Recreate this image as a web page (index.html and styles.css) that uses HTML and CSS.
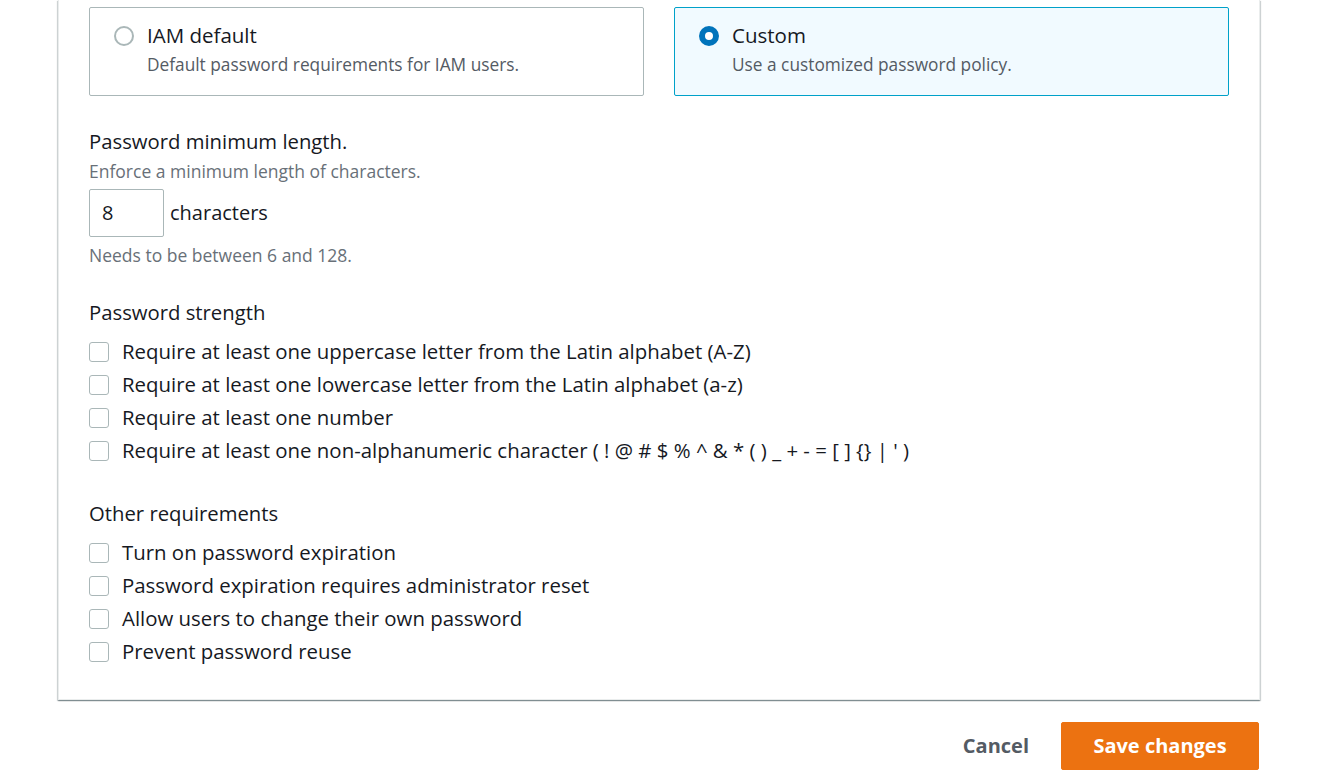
FILE: index.html
```html
<!DOCTYPE html>
<html lang="en">
<head>
<meta charset="utf-8">
<title>Password policy</title>
<link rel="stylesheet" href="styles.css">
</head>
<body>
<div class="page">
  <div class="card">
    <div class="tiles">
      <div class="tile">
        <div class="tile-head"><span class="radio"></span><span class="tile-label">IAM default</span></div>
        <div class="tile-desc">Default password requirements for IAM users.</div>
      </div>
      <div class="tile tile-selected">
        <div class="tile-head"><span class="radio radio-on"></span><span class="tile-label">Custom</span></div>
        <div class="tile-desc">Use a customized password policy.</div>
      </div>
    </div>

    <div class="field field-length">
      <div class="field-label">Password minimum length.</div>
      <div class="field-desc">Enforce a minimum length of characters.</div>
      <div class="length-row">
        <div class="input">8</div>
        <span class="unit">characters</span>
      </div>
      <div class="field-hint">Needs to be between 6 and 128.</div>
    </div>

    <div class="field field-strength">
      <div class="field-label">Password strength</div>
      <div class="checks">
        <div class="check"><span class="box"></span><span class="check-text">Require at least one uppercase letter from the Latin alphabet (A-Z)</span></div>
        <div class="check"><span class="box"></span><span class="check-text">Require at least one lowercase letter from the Latin alphabet (a-z)</span></div>
        <div class="check"><span class="box"></span><span class="check-text">Require at least one number</span></div>
        <div class="check"><span class="box"></span><span class="check-text">Require at least one non-alphanumeric character ( ! @ # $ % ^ &amp; * ( ) _ + - = [ ] {} | ' )</span></div>
      </div>
    </div>

    <div class="field field-other">
      <div class="field-label">Other requirements</div>
      <div class="checks">
        <div class="check"><span class="box"></span><span class="check-text">Turn on password expiration</span></div>
        <div class="check"><span class="box"></span><span class="check-text">Password expiration requires administrator reset</span></div>
        <div class="check"><span class="box"></span><span class="check-text">Allow users to change their own password</span></div>
        <div class="check"><span class="box"></span><span class="check-text">Prevent password reuse</span></div>
      </div>
    </div>
  </div>

  <div class="actions">
    <button class="btn-link">Cancel</button>
    <button class="btn-primary">Save changes</button>
  </div>
</div>
</body>
</html>
```

FILE: styles.css
```css
* { box-sizing: border-box; }
html, body { margin: 0; padding: 0; background: #ffffff; }
body {
  font-family: "Open Sans", "Noto Sans", sans-serif;
  color: #16191f;
  overflow: hidden;
}
.page {
  padding: 0 81px 0 58px;
}
.card {
  border: 1px solid #eaeded;
  border-top: none;
  background: #fff;
  box-shadow: 0 1px 1px 0 rgba(0, 28, 36, 0.3), 1px 1px 1px 0 rgba(0, 28, 36, 0.15), -1px 1px 1px 0 rgba(0, 28, 36, 0.15);
  padding: 7px 30px 35px 30px;
}
.tiles {
  display: grid;
  grid-template-columns: 1fr 1fr;
  gap: 30px;
}
.tile {
  border: 1px solid #aab7b8;
  border-radius: 2px;
  padding: 16px 24px 19px 24px;
}
.tile-selected {
  border-color: #00a1c9;
  background: #f1faff;
}
.tile-head {
  display: flex;
  align-items: center;
  height: 24px;
  gap: 13px;
}
.radio {
  width: 20px;
  height: 20px;
  border-radius: 50%;
  border: 2px solid #aab7b8;
  background: #fff;
  flex: none;
}
.radio-on {
  border: 6px solid #0073bb;
}
.tile-label {
  font-size: 20.5px;
  line-height: 24px;
  padding-bottom: 2px;
}
.tile-desc {
  margin-top: 6px;
  padding-left: 33px;
  font-size: 17.3px;
  line-height: 22px;
  color: #545b64;
}
.field-label {
  font-size: 20.3px;
  line-height: 24px;
  margin-top: -1px;
  padding-bottom: 1px;
}
.field-desc, .field-hint {
  font-size: 17.5px;
  line-height: 22px;
  color: #687078;
}
.field-length { margin-top: 34px; }
.field-desc { margin-top: 6px; }
.length-row {
  display: flex;
  align-items: center;
  gap: 6px;
  margin-top: 7px;
}
.input {
  width: 75px;
  height: 48px;
  border: 1px solid #aab7b8;
  border-radius: 2px;
  padding: 0 12px 1px 12px;
  display: flex;
  align-items: center;
  font-size: 20px;
}
.unit { font-size: 20px; padding-bottom: 1px; }
.field-hint { margin-top: 7px; }
.field-strength { margin-top: 35px; }
.field-other { margin-top: 39px; }
.checks {
  margin-top: 15px;
  display: flex;
  flex-direction: column;
  gap: 9px;
}
.check {
  display: flex;
  align-items: center;
  gap: 13px;
  height: 24px;
  font-size: 20.4px;
}
.check-text {
  line-height: 24px;
  padding-bottom: 2px;
}
.box {
  width: 20px;
  height: 20px;
  border: 1.5px solid #aab7b8;
  border-radius: 3px;
  background: #fff;
  flex: none;
}
.actions {
  display: flex;
  justify-content: flex-end;
  align-items: center;
  gap: 12px;
  margin-top: 22px;
  padding-right: 1px;
}
.btn-link, .btn-primary {
  font-family: "Open Sans", "Noto Sans", sans-serif;
  font-weight: 700;
  font-size: 20px;
  height: 48px;
  border-radius: 2px;
  padding-bottom: 3px;
  cursor: pointer;
}
.btn-link {
  background: none;
  border: none;
  color: #545b64;
  padding-left: 20px;
  padding-right: 20px;
}
.btn-primary {
  background: #ec7211;
  border: 1px solid #ec7211;
  color: #fff;
  width: 198px;
}
```
